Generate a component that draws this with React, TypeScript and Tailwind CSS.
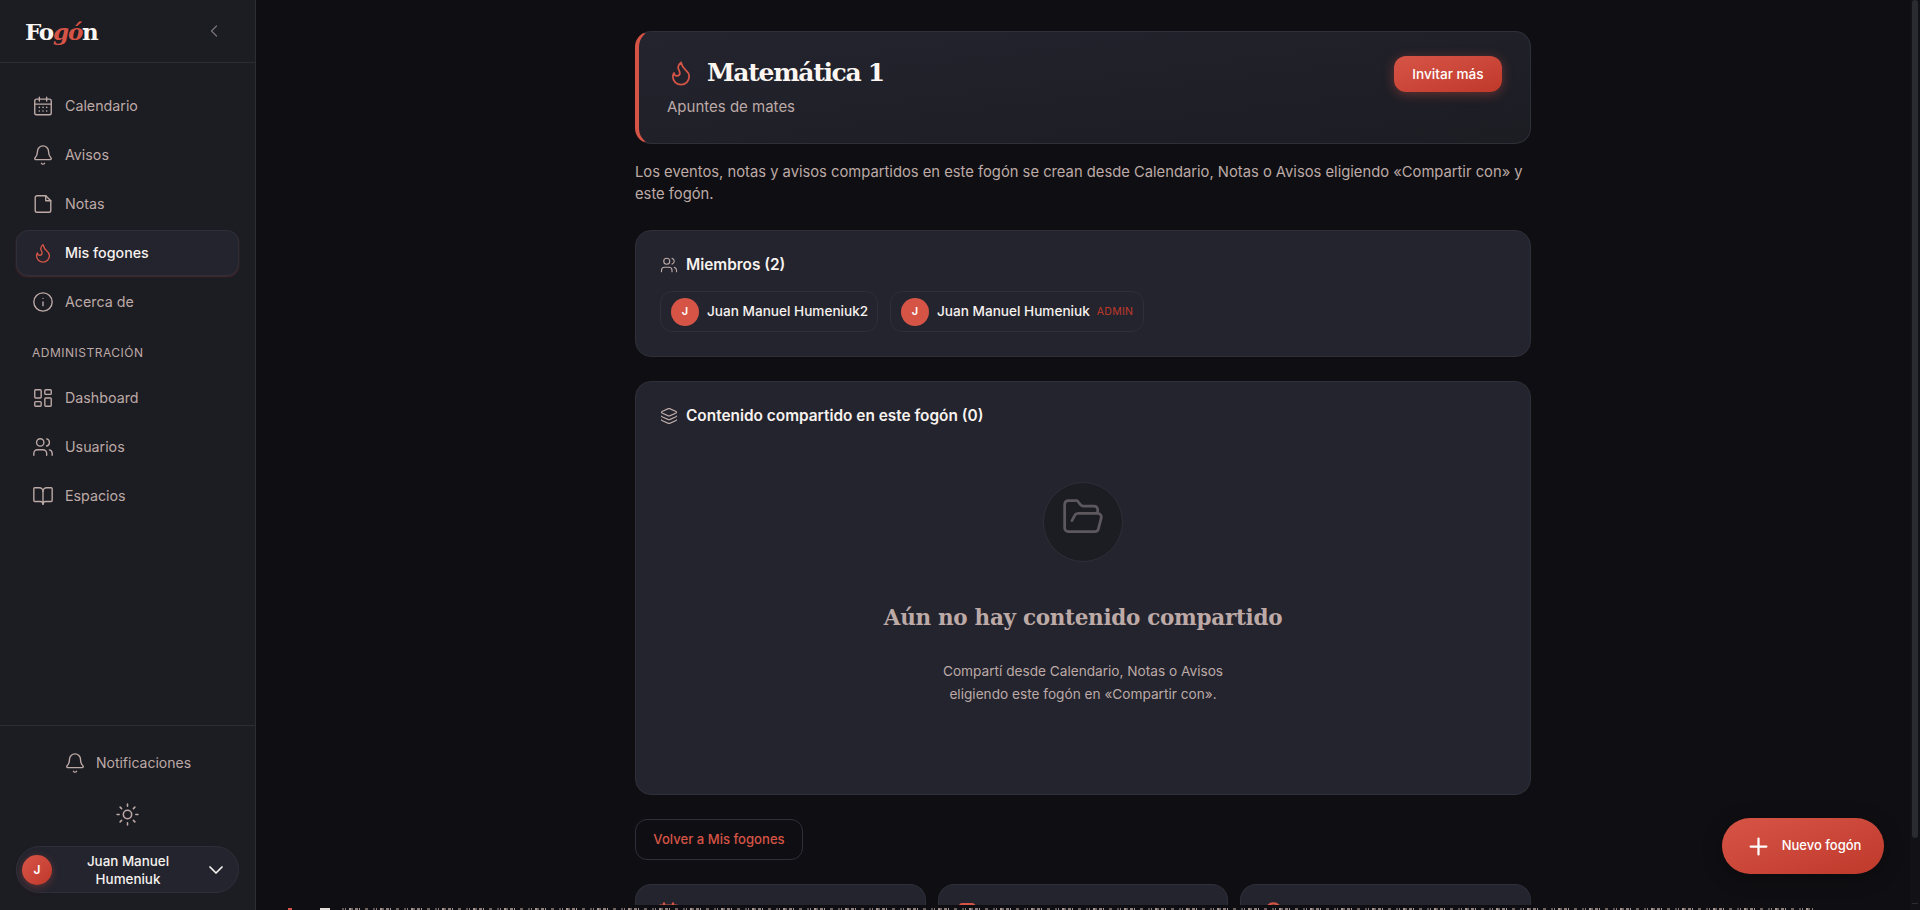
import { Bell, BookOpen, Calendar, ChevronDown, ChevronLeft, Flame, FolderOpen, Info, Layers, LayoutDashboard, Plus, StickyNote, Sun, Users } from 'lucide-react';
import type { ReactNode } from 'react';

const sans = 'font-["Inter","Liberation_Sans",sans-serif]';
const serif = 'font-["DejaVu_Serif","Liberation_Serif",serif]';

function CalendarIcon() {
  return (
    <svg viewBox="0 0 24 24" fill="none" stroke="currentColor" strokeWidth="1.5" className="w-[22px] h-[22px]" strokeLinecap="round" strokeLinejoin="round">
      <path d="M8 2.5v4M16 2.5v4M3 10h18" />
      <rect x="3" y="4.5" width="18" height="17" rx="2" />
      <path d="M8 13.5h.01M12 13.5h.01M16 13.5h.01M8 17.5h.01M12 17.5h.01M16 17.5h.01" strokeWidth="1.8" />
    </svg>
  );
}

function NoteIcon() {
  return (
    <svg viewBox="0 0 24 24" fill="none" stroke="currentColor" strokeWidth="1.5" className="w-[22px] h-[22px]" strokeLinecap="round" strokeLinejoin="round">
      <path d="M15 3H5.5a2 2 0 0 0-2 2v14a2 2 0 0 0 2 2h13a2 2 0 0 0 2-2V8.5z" />
      <path d="M15 3v5.5h5.5" />
    </svg>
  );
}

function NavItem({ icon, label, active }: { icon: ReactNode; label: string; active?: boolean }) {
  return (
    <div
      className={
        'h-[46px] flex items-center gap-[11px] rounded-xl text-[14.25px] ' +
        (active
          ? 'px-[15px] bg-[#23242e] text-[#f7f2ee] font-medium border border-[#2e2f39] shadow-[0_1px_2px_rgba(214,84,70,0.25)]'
          : 'px-4 text-[#bdaaa6]')
      }
    >
      <span className={'w-[22px] h-[22px] shrink-0 ' + (active ? 'text-[#d65446]' : 'text-[#bdaaa6]')}>{icon}</span>
      {label}
    </div>
  );
}

function Sidebar() {
  return (
    <aside className="w-[256px] shrink-0 h-full bg-[#1c1c23] border-r border-[#2c2c35] flex flex-col">
      <div className="h-[63px] shrink-0 border-b border-[#2c2c35] pl-[25px] pr-[31px] flex items-center justify-between">
        <div className={serif + ' font-bold text-[23px] tracking-[-1.2px] text-[#fbf6f1] leading-none'}>
          Fo<span className="italic text-[#d65446]">gó</span>n
        </div>
        <ChevronLeft className="w-5 h-5 text-[#77727a]" strokeWidth={1.5} />
      </div>
      <nav className="flex-1 px-4 pt-5 flex flex-col gap-[3px]">
        <NavItem icon={<CalendarIcon />} label="Calendario" />
        <NavItem icon={<Bell className="w-[22px] h-[22px]" strokeWidth={1.5} />} label="Avisos" />
        <NavItem icon={<NoteIcon />} label="Notas" />
        <NavItem icon={<Flame className="w-[22px] h-[22px]" strokeWidth={1.5} />} label="Mis fogones" active />
        <NavItem icon={<Info className="w-[22px] h-[22px]" strokeWidth={1.5} />} label="Acerca de" />
        <div className="text-xs tracking-[0.5px] text-[#bdaaa6] px-4 pt-[17px] pb-[11px] leading-4">ADMINISTRACIÓN</div>
        <NavItem icon={<LayoutDashboard className="w-[22px] h-[22px]" strokeWidth={1.5} />} label="Dashboard" />
        <NavItem icon={<Users className="w-[22px] h-[22px]" strokeWidth={1.5} />} label="Usuarios" />
        <NavItem icon={<BookOpen className="w-[22px] h-[22px]" strokeWidth={1.5} />} label="Espacios" />
      </nav>
      <div className="shrink-0 border-t border-[#2c2c35] px-4 pb-[17px] flex flex-col items-stretch">
        <div className="h-[73px] flex items-center justify-center gap-[10px] text-[14px] text-[#bdaaa6]">
          <Bell className="w-[22px] h-[22px]" strokeWidth={1.5} />
          Notificaciones
        </div>
        <div className="h-[30px] flex items-center justify-center text-[#bdaaa6]">
          <Sun className="w-[25px] h-[25px]" strokeWidth={1.5} />
        </div>
        <div className="mt-[17px] h-[47px] rounded-full bg-[#23242e] border border-[#2e2f39] flex items-center pl-[5px] pr-[10px]">
          <div className="w-[30px] h-[30px] shrink-0 rounded-full bg-gradient-to-br from-[#d65446] to-[#c0392b] flex items-center justify-center text-white text-xs font-semibold shadow-[0_2px_8px_rgba(214,84,70,0.35)]">J</div>
          <div className="flex-1 text-center text-[13.4px] leading-[18px] font-medium text-[#f7f2ee]">Juan Manuel<br />Humeniuk</div>
          <ChevronDown className="w-6 h-6 text-[#f7f2ee]" strokeWidth={1.75} />
        </div>
      </div>
    </aside>
  );
}

function MemberChip({ name, admin, wide }: { name: string; admin?: boolean; wide: string }) {
  return (
    <div className={'h-[41px] rounded-xl border border-[#2e2f39] flex items-center gap-2 pl-[10px] pr-[10px] ' + wide}>
      <div className="w-7 h-7 shrink-0 rounded-full bg-[#d65446] flex items-center justify-center text-white text-[11px] font-semibold">J</div>
      <span className="text-[13.6px] font-medium text-[#f7f2ee] whitespace-nowrap">{name}</span>
      {admin && <span className="text-[10.5px] tracking-[0.3px] text-[#c0392b] -ml-px">ADMIN</span>}
    </div>
  );
}

function Main() {
  return (
    <main className="flex-1 min-w-0 h-full overflow-hidden flex flex-col items-center pt-[31px] pr-[10px]">
      <div className="w-[896px] shrink-0 flex flex-col">
        <section className="h-[113px] rounded-2xl border border-[#2e2f39] border-l-4 border-l-[#d65446] bg-gradient-to-br from-[#23242e] to-[#1c1c23] pl-[28px] pr-[28px] pt-6 flex items-start justify-between">
          <div>
            <div className="flex items-center gap-3 h-8 mt-px">
              <Flame className="w-7 h-7 text-[#d65446]" strokeWidth={1.5} />
              <h1 className={serif + ' font-bold text-[25px] tracking-[-1.3px] leading-8 text-[#fbf6f1]'}>Matemática 1</h1>
            </div>
            <p className="text-[15px] leading-[22px] text-[#bdaaa6] mt-[7px]">Apuntes de mates</p>
          </div>
          <button className="w-[108px] h-9 rounded-xl bg-gradient-to-br from-[#d65446] to-[#c0392b] text-white text-[13.6px] font-medium shadow-[0_2px_12px_rgba(214,84,70,0.4)]">Invitar más</button>
        </section>

        <p className="mt-[17px] text-[14.75px] leading-[22px] text-[#bdaaa6]">
          Los eventos, notas y avisos compartidos en este fogón se crean desde Calendario, Notas o Avisos eligiendo «Compartir con» y este fogón.
        </p>

        <section className="mt-[25px] h-[127px] rounded-2xl border border-[#2e2f39] bg-[#23242e] px-6 pt-[23px]">
          <div className="flex items-center gap-[8px] h-[22px]">
            <Users className="w-[18px] h-[18px] text-[#bdaaa6]" strokeWidth={1.5} />
            <h2 className="text-[15.4px] font-semibold text-[#f7f2ee]">Miembros (2)</h2>
          </div>
          <div className="flex gap-3 mt-[15px]">
            <MemberChip name="Juan Manuel Humeniuk2" wide="w-[218px]" />
            <MemberChip name="Juan Manuel Humeniuk" admin wide="w-[254px]" />
          </div>
        </section>

        <section className="mt-[24px] h-[414px] rounded-2xl border border-[#2e2f39] bg-[#23242e] px-6 pt-[23px] flex flex-col">
          <div className="flex items-center gap-[8px] h-[22px]">
            <Layers className="w-[18px] h-[18px] text-[#bdaaa6]" strokeWidth={1.5} />
            <h2 className="text-[15.4px] font-semibold text-[#f7f2ee]">Contenido compartido en este fogón (0)</h2>
          </div>
          <div className="flex flex-col items-center mt-[55px]">
            <div className="w-20 h-20 rounded-full bg-[#1c1c23] border border-[#2e2f39] flex items-center justify-center">
              <FolderOpen className="w-11 h-11 mb-[10px] text-[#5c585e]" strokeWidth={1.5} />
            </div>
            <h3 className={serif + ' mt-[40px] font-bold text-[21.5px] tracking-[-0.3px] leading-8 text-[#bdaaa6]'}>Aún no hay contenido compartido</h3>
            <p className="mt-[26px] text-[13.65px] leading-[23px] text-[#bdaaa6] text-center">
              Compartí desde Calendario, Notas o Avisos<br />eligiendo este fogón en «Compartir con».
            </p>
          </div>
        </section>

        <button className="mt-6 self-start w-[168px] h-[41px] rounded-xl border border-[#2e2f39] text-[#d65446] text-[13.1px] font-medium">Volver a Mis fogones</button>

        <div className="mt-6 grid grid-cols-3 grid-rows-[21px] gap-3">
          <div className="overflow-hidden rounded-t-2xl border border-b-0 border-[#2e2f39] bg-[#23242e] pl-[19px] pt-4"><Calendar className="w-[27px] h-[27px] text-[#d65446]" /></div>
          <div className="overflow-hidden rounded-t-2xl border border-b-0 border-[#2e2f39] bg-[#23242e] pl-[18px] pt-4"><StickyNote className="w-6 h-6 text-[#d65446]" /></div>
          <div className="overflow-hidden rounded-t-2xl border border-b-0 border-[#2e2f39] bg-[#23242e] pl-[19px] pt-4"><Bell className="w-[27px] h-[27px] text-[#d65446]" /></div>
        </div>
      </div>
    </main>
  );
}

export default function App() {
  return (
    <div className={'relative w-full h-[910px] overflow-hidden flex bg-[#0f0f13] ' + sans}>
      <Sidebar />
      <Main />
      <button className="absolute left-[1722px] top-[818px] w-[162px] h-14 rounded-full bg-gradient-to-br from-[#d65446] to-[#c0392b] text-white text-[13px] font-medium flex items-center justify-center gap-[10px] shadow-[0_4px_20px_rgba(0,0,0,0.3)]">
        <Plus className="w-[27px] h-[27px]" strokeWidth={2} />
        Nuevo fogón
      </button>
      <div className="absolute right-0 top-0 w-[10px] h-full bg-[#111116] flex flex-col items-center justify-between pb-[6px]">
        <div className="w-[6px] h-[838px] rounded-full bg-[#2a2a31]" />
        <div className="w-[6px] h-px bg-[#2a2a31]" />
      </div>
      {/* clipped line of text along the bottom edge */}
      <div className="absolute left-[288px] bottom-0 h-[2px] w-[4px] bg-[#d65446]" />
      <div className="absolute left-[320px] bottom-0 h-[2px] w-[10px] bg-[#e5dedb]" />
      <div className="absolute left-[342px] bottom-0 h-[2px] w-[1471px] bg-[repeating-linear-gradient(90deg,#a8989480_0_2px,#0f0f13_2px_3px,#8f7f7c_3px_4px,#0f0f13_4px_7px,#a89894_7px_9px,#6f6360_9px_11px,#0f0f13_11px_13px,#8f7f7c_13px_16px,#0f0f13_16px_17px,#a89894_17px_18px,#0f0f13_18px_23px,#6f6360_23px_26px,#0f0f13_26px_31px)]" />
    </div>
  );
}
